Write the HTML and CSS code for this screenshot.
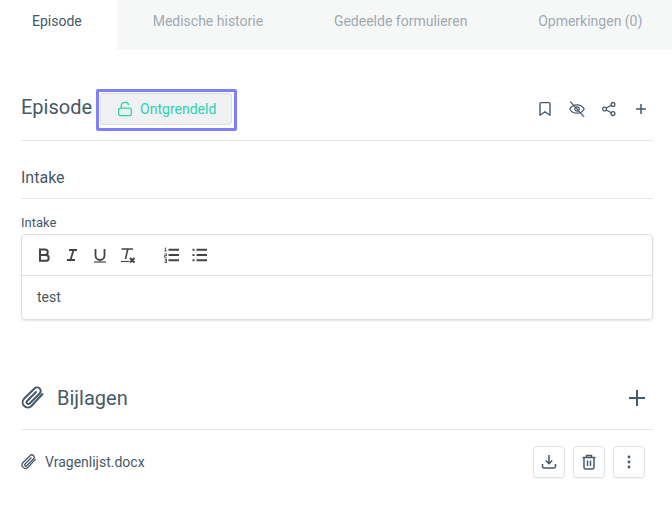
FILE: index.html
```html
<!DOCTYPE html>
<html lang="nl">
<head>
<meta charset="utf-8">
<title>Episode</title>
<link rel="stylesheet" href="styles.css">
</head>
<body>
<nav class="tabs">
  <a class="tab tab-active">Episode</a>
  <a class="tab">Medische historie</a>
  <a class="tab">Gedeelde formulieren</a>
  <a class="tab">Opmerkingen (0)</a>
</nav>
<main class="content">
  <header class="head">
    <h1 class="title">Episode</h1>
    <div class="focus-ring">
      <button class="lock">
        <svg width="16" height="16" viewBox="0 0 16 16" fill="none" stroke="currentColor" stroke-width="1.3"><rect x="1.700" y="7.200" width="12.600" height="7.400" rx="1.600"/><path d="M4.300 7V4.600A3.400 3.400 0 0 1 7.700 1.400h.6a3.400 3.400 0 0 1 3.400 2.600"/></svg>
        <span>Ontgrendeld</span>
      </button>
    </div>
    <div class="actions">
      <svg width="16" height="16" viewBox="0 0 16 16" fill="none" stroke="currentColor" stroke-width="1.400" stroke-linejoin="round"><path d="M3 2.800a1.200 1.200 0 0 1 1.200-1.200h7.600A1.200 1.200 0 0 1 13 2.800v11.400l-5-3.500-5 3.500z"/></svg>
      <svg width="16" height="16" viewBox="0 0 16 16" fill="none" stroke="currentColor" stroke-width="1.200" stroke-linecap="round"><path d="M.8 8C2.300 5.200 5 3.800 8 3.800s5.700 1.400 7.200 4.200c-1.500 2.800-4.200 4.200-7.200 4.200S2.300 10.800.8 8z"/><circle cx="8" cy="8" r="2.200"/><path d="M1.500.8l13.500 15"/></svg>
      <svg width="16" height="16" viewBox="0 0 16 16" fill="none" stroke="currentColor" stroke-width="1.300"><circle cx="12" cy="3.400" r="1.900"/><circle cx="3.600" cy="8" r="1.900"/><circle cx="12" cy="12.600" r="1.900"/><path d="M5.300 7l5-2.700M5.300 9l5 2.700"/></svg>
      <svg width="16" height="16" viewBox="0 0 16 16" fill="none" stroke="currentColor" stroke-width="1.500"><path d="M8 3v10M3 8h10"/></svg>
    </div>
  </header>
  <h2 class="section">Intake</h2>
  <label class="field-label">Intake</label>
  <div class="editor">
    <div class="toolbar">
      <svg width="18" height="18" viewBox="0 0 18 18" fill="none" stroke="#444" stroke-width="2"><path d="M5 3.500h5a2.700 2.700 0 0 1 0 5.500H5zM5 9h5.800a2.900 2.900 0 0 1 0 5.800H5zM5 2.500v13.300"/></svg>
      <svg width="18" height="18" viewBox="0 0 18 18" fill="none" stroke="#444" stroke-width="1.800"><path d="M6 4h8M4 14h8M10.500 4l-3 10"/></svg>
      <svg width="18" height="18" viewBox="0 0 18 18" fill="none" stroke="#444" stroke-width="1.800"><path d="M4.500 3v6.500a4.500 4.500 0 0 0 9 0V3"/><path stroke-width="1.200" d="M3 16h12"/></svg>
      <svg width="18" height="18" viewBox="0 0 18 18" fill="none" stroke="#444" stroke-width="1.600"><path d="M2.500 3h11.500M8.800 3L6.500 13"/><path stroke-width="1.100" d="M2 15.500h8"/><path stroke-width="2" d="M11 12l4.500 4.500M15.500 12L11 16.500"/></svg>
      <svg class="gap" width="18" height="18" viewBox="0 0 18 18" fill="none" stroke="#444"><path stroke-width="2" d="M5.500 3.700H16M5.500 9H16M5.500 14.300H16"/><path stroke-width=".9" d="M1.800 2.200l.8-.4V5M1.500 5h2.200M1.500 7.800h2v1.700h-2v1.700h2.200M1.500 13h2v3.500h-2M1.800 14.800h1.700"/></svg>
      <svg width="18" height="18" viewBox="0 0 18 18" fill="none" stroke="#444" stroke-width="2"><path d="M5.500 3.700H16M5.500 9H16M5.500 14.300H16M1.500 3.700h2M1.500 9h2M1.500 14.300h2"/></svg>
    </div>
    <div class="editor-body">test</div>
  </div>
  <section class="attach-head">
    <svg class="clip-lg" width="24" height="24" viewBox="0 0 24 24" fill="none" stroke="currentColor" stroke-width="2" stroke-linecap="round"><path d="M21.500 8l-11 12a5.200 5.200 0 0 1-7.500-7.200L13.500 2.500a3.600 3.600 0 0 1 5.200 5L8.700 17.500a1.800 1.800 0 0 1-2.600-2.500L15 6"/></svg>
    <h2 class="attach-title">Bijlagen</h2>
    <svg class="plus-lg" width="20" height="20" viewBox="0 0 20 20" fill="none" stroke="currentColor" stroke-width="2"><path d="M10 2v16M2 10h16"/></svg>
  </section>
  <div class="file">
    <svg class="clip-sm" width="16" height="16" viewBox="0 0 24 24" fill="none" stroke="currentColor" stroke-width="2" stroke-linecap="round"><path d="M21.500 8l-11 12a5.200 5.200 0 0 1-7.500-7.200L13.500 2.500a3.600 3.600 0 0 1 5.200 5L8.700 17.500a1.800 1.800 0 0 1-2.600-2.500L15 6"/></svg>
    <span class="file-name">Vragenlijst.docx</span>
    <div class="file-actions">
      <button class="icon-btn"><svg width="16" height="16" viewBox="0 0 16 16" fill="none" stroke="currentColor" stroke-width="1.500"><path d="M8 1v8.500M4.800 6.500L8 9.700l3.200-3.200M1.500 10v2.500a1.500 1.500 0 0 0 1.500 1.500h10a1.500 1.500 0 0 0 1.500-1.500V10"/></svg></button>
      <button class="icon-btn"><svg width="16" height="16" viewBox="0 0 16 16" fill="none" stroke="currentColor" stroke-width="1.500"><path d="M1.500 3.500h13M5.500 3.300V1.500h5v1.800M3 3.500v9.700A1.800 1.800 0 0 0 4.800 15h6.400a1.800 1.800 0 0 0 1.800-1.800V3.500M6.500 6.500v5.500M9.500 6.500v5.500"/></svg></button>
      <button class="icon-btn"><svg width="16" height="16" viewBox="0 0 16 16" fill="currentColor"><circle cx="8" cy="3" r="1.400"/><circle cx="8" cy="8" r="1.400"/><circle cx="8" cy="13" r="1.400"/></svg></button>
    </div>
  </div>
</main>
</body>
</html>
```
FILE: styles.css
```css
* { box-sizing: border-box; }
html, body { margin: 0; padding: 0; }
body {
  width: 672px;
  height: 508px;
  overflow: hidden;
  background: #fff;
  font-family: Roboto, sans-serif;
  color: #465968;
}
svg { display: block; flex: none; }

.tabs { display: flex; height: 50px; background: #f6f8f8; }
.tab {
  padding: 13px 35.4px 0;
  font-size: 14px;
  line-height: 16px;
  color: #a0a9b2;
  white-space: nowrap;
}
.tab-active { padding-left: 32px; padding-right: 35.5px; background: #fff; color: #465968; }

.content { padding: 39px 19px 0 21px; }

.head {
  display: flex;
  align-items: flex-start;
  height: 52px;
  border-bottom: 1px solid #e4e6e8;
}
.title {
  margin: 6px 4px 0 0;
  font-size: 20px;
  font-weight: 400;
  line-height: 24px;
}
.focus-ring {
  width: 141px;
  height: 42px;
  padding: 1px 2px 3px 1px;
  border: 3px solid #8080ff;
  border-radius: 2px;
}
.lock {
  display: flex;
  align-items: center;
  gap: 7px;
  width: 132px;
  height: 32px;
  padding: 0 0 0 16px;
  border: 1px solid #dcdfe2;
  border-radius: 3px;
  background: #eff1f3;
  color: #2bd4ae;
  font-family: inherit;
  font-size: 14px;
}
.actions {
  display: flex;
  align-items: center;
  gap: 16px;
  margin: 12px 4px 0 auto;
  color: #465968;
}

.section {
  margin: 0;
  height: 58px;
  padding-top: 27px;
  border-bottom: 1px solid #e4e6e8;
  font-size: 16px;
  font-weight: 400;
  line-height: 19px;
}
.field-label {
  display: block;
  margin-top: 16px;
  font-size: 13px;
  line-height: 16px;
  color: #465968;
}
.editor {
  margin-top: 3px;
  height: 86px;
  border: 1px solid #dcdfe2;
  border-radius: 4px;
  box-shadow: 0 1px 2px rgba(0, 0, 0, .1);
}
.toolbar {
  display: flex;
  align-items: center;
  gap: 10px;
  height: 41px;
  padding-left: 13px;
  border-bottom: 1px solid #dcdfe2;
}
.toolbar .gap { margin-left: 16px; }
.editor-body {
  padding: 13px 15px;
  font-size: 14px;
  line-height: 16px;
  color: #4a5560;
}

.attach-head {
  display: flex;
  align-items: center;
  margin-top: 62px;
  height: 48px;
  padding-bottom: 16px;
  border-bottom: 1px solid #e4e6e8;
}
.clip-lg { margin-right: 12px; }
.attach-title { margin: 0; font-size: 20px; font-weight: 400; line-height: 24px; }
.plus-lg { margin-left: auto; margin-right: 6px; }

.file { display: flex; align-items: center; margin-top: 16px; height: 32px; }
.clip-sm { margin-right: 8px; }
.file-name { font-size: 14px; }
.file-actions { display: flex; gap: 8px; margin-left: auto; margin-right: 8px; }
.icon-btn {
  display: flex;
  align-items: center;
  justify-content: center;
  width: 32px;
  height: 32px;
  padding: 0;
  border: 1px solid #e0e2e4;
  border-radius: 4px;
  background: #fff;
  color: #465968;
  box-shadow: 0 1px 2px rgba(0, 0, 0, .06);
}
```
